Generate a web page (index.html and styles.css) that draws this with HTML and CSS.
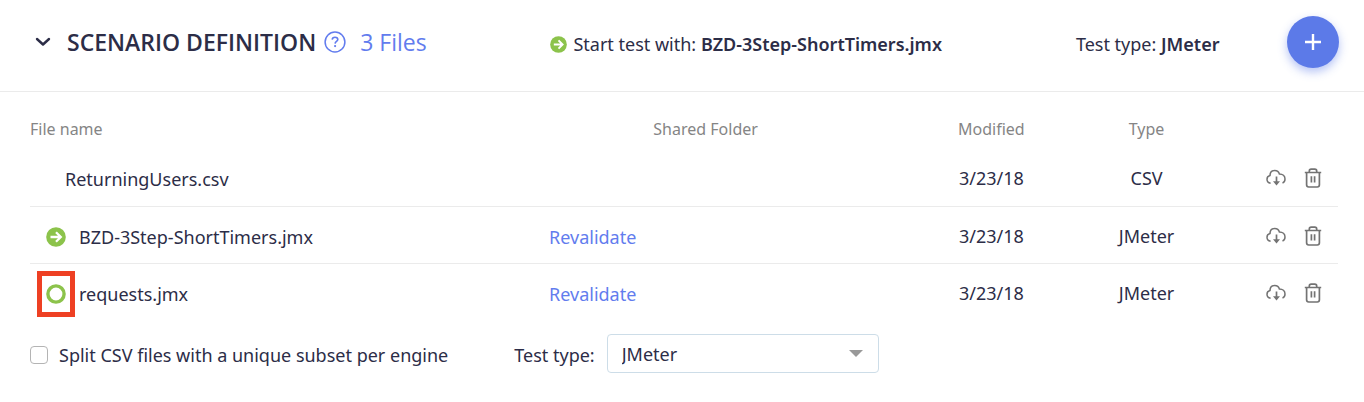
FILE: index.html
```html
<!DOCTYPE html>
<html lang="en">
<head>
  <meta charset="UTF-8" />
  <title>Scenario Definition</title>
  <link rel="stylesheet" href="styles.css">
</head>
<body>

  <!-- shared icons -->
  <svg class="sprite" aria-hidden="true">
    <symbol id="icon-start" viewBox="0 0 20 20">
      <circle cx="10" cy="10" r="9.8" fill="#8cc34b"/>
      <path d="M4.5 10H14M10 5.2L14.8 10L10 14.8" fill="none" stroke="#fff" stroke-width="2.3"/>
    </symbol>
    <symbol id="icon-ring" viewBox="0 0 20 20">
      <circle cx="10" cy="10" r="8.1" fill="none" stroke="#8cc34b" stroke-width="3.4"/>
    </symbol>
    <symbol id="icon-download" viewBox="0 0 20 18" fill="none" stroke="#737373">
      <path d="M4.6 14.2C2.4 13.8 1 12.3 1 10.2C1 8.3 2.2 7 4 6.5C4 3.5 6 1.5 8.7 1.5C11 1.5 12.8 2.8 13.4 5C16.7 5 19 7 19 10C19 12 18.1 13.4 16.5 14" stroke-width="1.5"/>
      <path d="M10.5 7.5V14" stroke-width="1.7"/>
      <path d="M7 12.2H14L10.5 16.5Z" fill="#737373" stroke="none"/>
    </symbol>
    <symbol id="icon-trash" viewBox="0 0 18 20" fill="none" stroke="#737373">
      <path d="M0.8 4.5H17.2M5.3 4.5V3.2C5.3 1.9 6 1.2 7.2 1.2H10.8C12 1.2 12.7 1.9 12.7 3.2V4.5M2.6 4.5V16.8C2.6 18.2 3.3 19 4.7 19H13.3C14.7 19 15.4 18.2 15.4 16.8V4.5" stroke-width="1.7"/>
      <path d="M7.4 8.3V14.6M10.6 8.3V14.6" stroke-width="1.7"/>
    </symbol>
  </svg>

  <header class="panel-header">
    <div class="title-group">
      <button class="icon-btn toggle" aria-label="Collapse">
        <svg width="16" height="10" viewBox="0 0 16 10"><path d="M2 2L8 7.5L14 2" fill="none" stroke="#2c2d47" stroke-width="2.4" stroke-linecap="round" stroke-linejoin="round"/></svg>
      </button>
      <h2>SCENARIO DEFINITION</h2>
      <button class="icon-btn help" aria-label="Help">
        <svg width="22" height="22" viewBox="0 0 22 22" fill="none" stroke="#627cee">
          <circle cx="11" cy="11" r="9.9" stroke-width="1.5"/>
          <path d="M8.2 8.6C8.3 7.1 9.4 6.2 11 6.2C12.7 6.2 13.8 7.1 13.8 8.5C13.8 10.4 11.2 10.4 11.1 12.6" stroke-width="1.6"/>
          <circle cx="11.1" cy="15.1" r="1.1" fill="#627cee" stroke="none"/>
        </svg>
      </button>
      <a class="files-link" href="#files">3 Files</a>
    </div>
    <p class="start-with">
      <svg width="17" height="17"><use href="#icon-start"/></svg>
      <span>Start test with: <strong>BZD-3Step-ShortTimers.jmx</strong></span>
    </p>
    <p class="test-type">Test type: <strong>JMeter</strong></p>
    <button class="add-btn" aria-label="Add file">
      <svg width="18" height="18" viewBox="0 0 18 18"><path d="M9 1V17M1 9H17" stroke="#fff" stroke-width="2.4"/></svg>
    </button>
  </header>

  <main class="panel-body">
    <table id="files" class="files-table">
      <thead>
        <tr>
          <th class="col-name">File name</th>
          <th class="col-shared">Shared Folder</th>
          <th class="col-modified">Modified</th>
          <th class="col-type">Type</th>
          <th class="col-actions"></th>
        </tr>
      </thead>
      <tbody>
        <tr>
          <td><div class="file plain">ReturningUsers.csv</div></td>
          <td class="shared"></td>
          <td class="centered">3/23/18</td>
          <td class="centered">CSV</td>
          <td>
            <div class="actions">
              <button class="icon-btn" aria-label="Download"><svg width="20" height="18"><use href="#icon-download"/></svg></button>
              <button class="icon-btn" aria-label="Delete"><svg width="18" height="20"><use href="#icon-trash"/></svg></button>
            </div>
          </td>
        </tr>
        <tr>
          <td>
            <div class="file">
              <button class="icon-btn marker" aria-label="Start test file"><svg width="20" height="20"><use href="#icon-start"/></svg></button>
              BZD-3Step-ShortTimers.jmx
            </div>
          </td>
          <td class="shared"><a href="#">Revalidate</a></td>
          <td class="centered">3/23/18</td>
          <td class="centered">JMeter</td>
          <td>
            <div class="actions">
              <button class="icon-btn" aria-label="Download"><svg width="20" height="18"><use href="#icon-download"/></svg></button>
              <button class="icon-btn" aria-label="Delete"><svg width="18" height="20"><use href="#icon-trash"/></svg></button>
            </div>
          </td>
        </tr>
        <tr>
          <td>
            <div class="file">
              <button class="icon-btn marker highlighted" aria-label="Use as start test file"><svg width="20" height="20"><use href="#icon-ring"/></svg></button>
              requests.jmx
            </div>
          </td>
          <td class="shared"><a href="#">Revalidate</a></td>
          <td class="centered">3/23/18</td>
          <td class="centered">JMeter</td>
          <td>
            <div class="actions">
              <button class="icon-btn" aria-label="Download"><svg width="20" height="18"><use href="#icon-download"/></svg></button>
              <button class="icon-btn" aria-label="Delete"><svg width="18" height="20"><use href="#icon-trash"/></svg></button>
            </div>
          </td>
        </tr>
      </tbody>
    </table>

    <div class="options">
      <label class="split"><input type="checkbox" name="split"> Split CSV files with a unique subset per engine</label>
      <label for="testType" class="type-label">Test type:</label>
      <div class="select-wrap">
        <select id="testType">
          <option>JMeter</option>
        </select>
        <svg class="caret" width="14" height="7" viewBox="0 0 14 7"><path d="M0 0H14L7 7Z" fill="#999"/></svg>
      </div>
    </div>
  </main>

</body>
</html>
```

FILE: styles.css
```css
* {
  box-sizing: border-box;
}
body {
  margin: 0;
  background-color: #fff;
  color: #2c2d47;
  font-family: "Noto Sans", "Open Sans", sans-serif;
  font-size: 18px;
  line-height: 24px;
}
a {
  color: #627cee;
  text-decoration: none;
}
strong {
  font-weight: 600;
}
p, h2 {
  margin: 0;
}
svg {
  display: block;
  flex: none;
}
.sprite {
  position: absolute;
  width: 0;
  height: 0;
}
.icon-btn {
  display: flex;
  padding: 0;
  border: 0;
  background: none;
  cursor: pointer;
}

/* header */
.panel-header {
  display: grid;
  grid-template-columns: 38% 39% 1fr auto;
  align-items: center;
  padding: 16px 25px 23px 30px;
  border-bottom: 1px solid #ebebeb;
}
.title-group {
  display: flex;
  align-items: center;
  font-family: "Open Sans", sans-serif;
}
.toggle {
  padding: 0 5px;
}
h2 {
  margin-left: 11px;
  font-size: 23px;
  font-weight: 600;
}
.help {
  margin: 0 14px 0 8px;
}
.files-link {
  font-size: 23px;
}
.start-with {
  display: flex;
  align-items: center;
  gap: 6px;
  margin-left: 23px;
}
.test-type {
  margin-left: 38px;
}
.start-with,
.test-type {
  padding-top: 4px;
}
.add-btn {
  display: flex;
  align-items: center;
  justify-content: center;
  width: 52px;
  height: 52px;
  border: 0;
  border-radius: 50%;
  background-color: #5c7ae8;
  box-shadow: 0 4px 10px rgba(92, 122, 232, 0.45);
}

/* files */
.panel-body {
  padding: 0 26px 0 30px;
}
.files-table {
  width: 100%;
  table-layout: fixed;
  border-collapse: collapse;
}
th {
  height: 57px;
  padding: 16px 0 0;
  color: #858585;
  font-size: 16px;
  font-weight: 400;
}
.col-name {
  width: 38%;
  text-align: left;
}
.col-shared {
  width: 27%;
  padding-left: 4px;
}
.col-modified {
  width: 17%;
}
.col-type {
  width: 88px;
}
td {
  height: 57px;
  padding: 2px 0 0;
}
tbody tr + tr {
  border-top: 1px solid #ebebeb;
}
.shared {
  padding: 4px 0 0 22px;
}
.centered {
  text-align: center;
}
.file {
  display: flex;
  align-items: center;
  gap: 4px;
  padding: 2px 0 0 7px;
}
.file.plain {
  padding-left: 35px;
}
.marker {
  padding: 8px 4px;
  border: 5px solid transparent;
}
.marker.highlighted {
  border-color: #ee4023;
}
.actions {
  display: flex;
  align-items: center;
  justify-content: flex-end;
  gap: 18px;
  padding-right: 16px;
}

/* options */
.options {
  display: flex;
  align-items: center;
  padding-top: 14px;
}
.split {
  display: flex;
  align-items: center;
  gap: 11px;
  margin-right: 66px;
}
.split,
.type-label {
  padding-top: 2px;
}
input[type="checkbox"] {
  appearance: none;
  width: 18px;
  height: 18px;
  margin: 0;
  border: 1px solid #b4b4b4;
  border-radius: 4px;
  background-color: #fff;
}
.select-wrap {
  position: relative;
  margin-left: 12px;
}
select {
  appearance: none;
  width: 272px;
  height: 39px;
  padding: 0 40px 0 14px;
  border: 1px solid #cddde8;
  border-radius: 4px;
  background-color: #fff;
  color: #2c2d47;
  font: inherit;
}
.caret {
  position: absolute;
  top: 16px;
  right: 16px;
  pointer-events: none;
}
```
